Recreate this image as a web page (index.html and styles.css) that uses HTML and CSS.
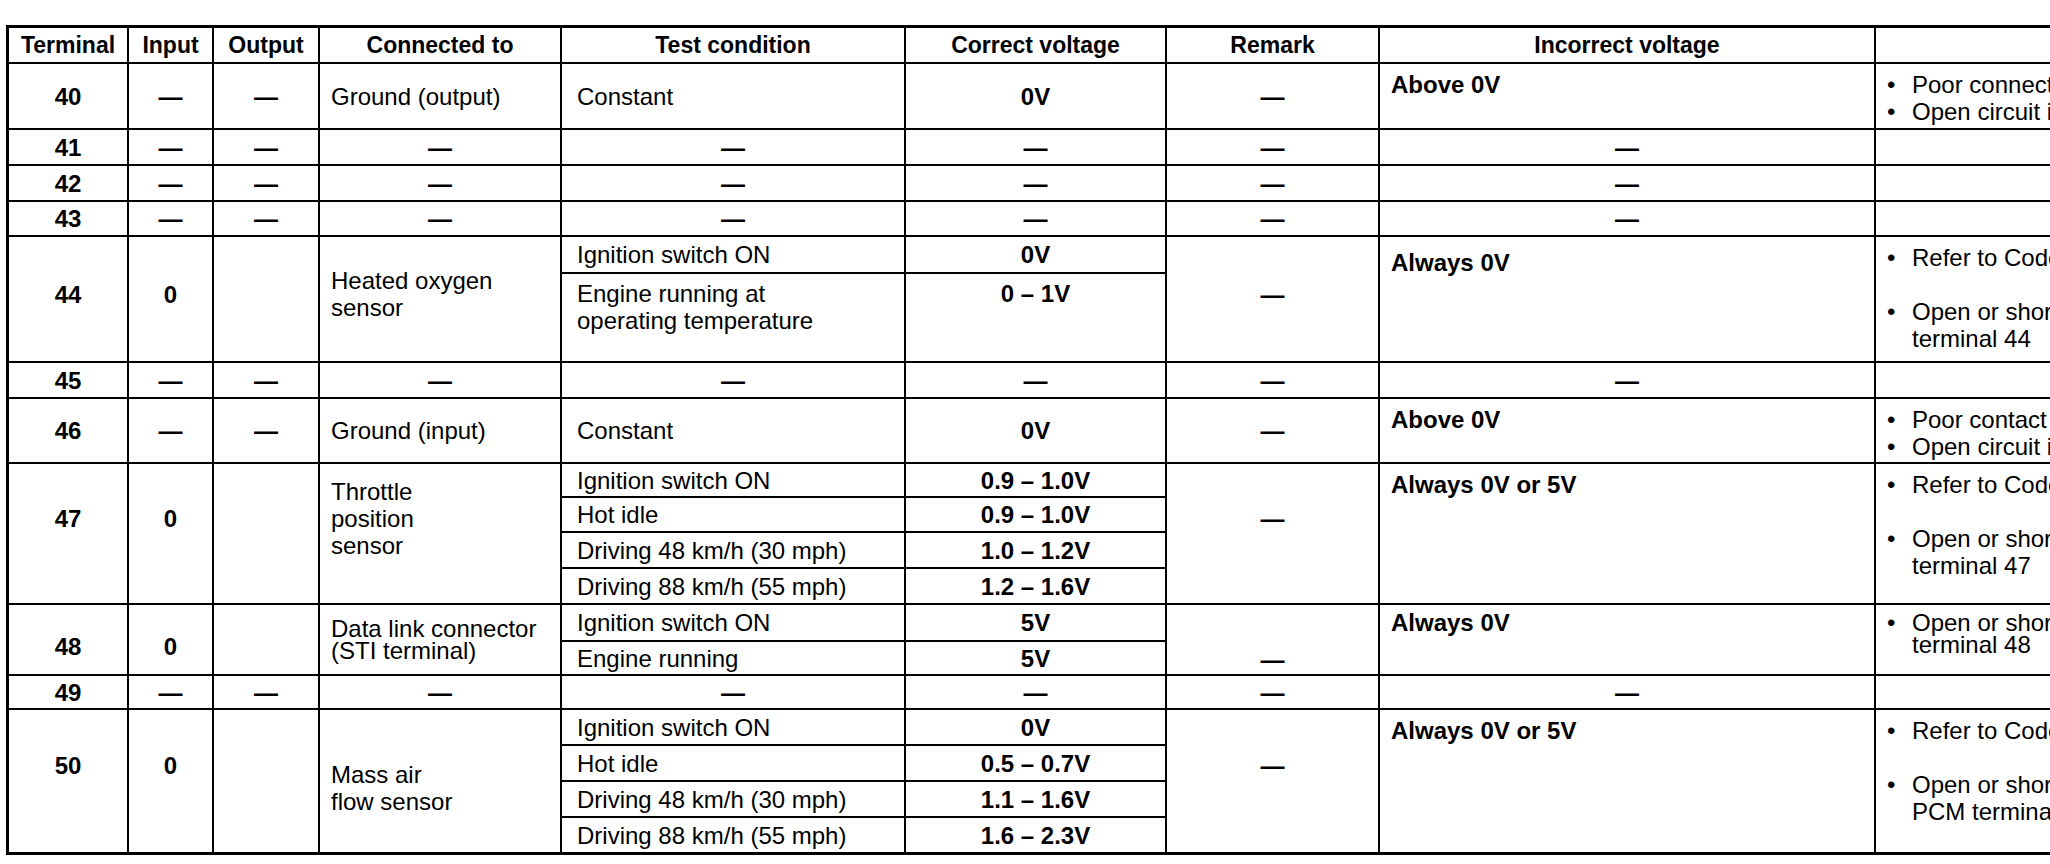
FILE: index.html
```html
<!DOCTYPE html>
<html lang="en">
<head>
<meta charset="utf-8">
<title>PCM terminal voltage table</title>
<link rel="stylesheet" href="styles.css">
</head>
<body>
<div class="page">
  <div class="sheet">
    <!-- header -->
    <div class="c h">Terminal</div>
    <div class="c h">Input</div>
    <div class="c h">Output</div>
    <div class="c h">Connected to</div>
    <div class="c h">Test condition</div>
    <div class="c h">Correct voltage</div>
    <div class="c h">Remark</div>
    <div class="c h">Incorrect voltage</div>
    <div class="c h"></div>

    <!-- 40 -->
    <div class="c ctr b">40</div>
    <div class="c ctr b">—</div>
    <div class="c ctr b">—</div>
    <div class="c lft">Ground (output)</div>
    <div class="c tc">Constant</div>
    <div class="c ctr b">0V</div>
    <div class="c ctr b">—</div>
    <div class="c inc top">Above 0V</div>
    <div class="c lst">
      <div class="li"><span class="bul">•</span><span>Poor connection of ground circuit</span></div>
      <div class="li"><span class="bul">•</span><span>Open circuit in ground circuit</span></div>
    </div>

    <!-- 41 -->
    <div class="c ctr b">41</div>
    <div class="c ctr b">—</div>
    <div class="c ctr b">—</div>
    <div class="c ctr b">—</div>
    <div class="c ctr b">—</div>
    <div class="c ctr b">—</div>
    <div class="c ctr b">—</div>
    <div class="c ctr b">—</div>
    <div class="c"></div>

    <!-- 42 -->
    <div class="c ctr b">42</div>
    <div class="c ctr b">—</div>
    <div class="c ctr b">—</div>
    <div class="c ctr b">—</div>
    <div class="c ctr b">—</div>
    <div class="c ctr b">—</div>
    <div class="c ctr b">—</div>
    <div class="c ctr b">—</div>
    <div class="c"></div>

    <!-- 43 -->
    <div class="c ctr b">43</div>
    <div class="c ctr b">—</div>
    <div class="c ctr b">—</div>
    <div class="c ctr b">—</div>
    <div class="c ctr b">—</div>
    <div class="c ctr b">—</div>
    <div class="c ctr b">—</div>
    <div class="c ctr b">—</div>
    <div class="c"></div>

    <!-- 44 -->
    <div class="c ctr b s2 up5">44</div>
    <div class="c ctr b s2 up5">0</div>
    <div class="c s2"></div>
    <div class="c lft s2 up5">Heated oxygen<br>sensor</div>
    <div class="c tc">Ignition switch ON</div>
    <div class="c ctr b">0V</div>
    <div class="c ctr b s2 up5">—</div>
    <div class="c inc top top12 s2">Always 0V</div>
    <div class="c lst top12 s2">
      <div class="li"><span class="bul">•</span><span>Refer to Code No.15</span></div>
      <div class="li gap"><span class="bul">•</span><span>Open or short circuit between heated oxygen sensor and PCM<br>terminal 44</span></div>
    </div>
    <div class="c tc top top6">Engine running at<br>operating temperature</div>
    <div class="c ctr b top top6">0 – 1V</div>

    <!-- 45 -->
    <div class="c ctr b">45</div>
    <div class="c ctr b">—</div>
    <div class="c ctr b">—</div>
    <div class="c ctr b">—</div>
    <div class="c ctr b">—</div>
    <div class="c ctr b">—</div>
    <div class="c ctr b">—</div>
    <div class="c ctr b">—</div>
    <div class="c"></div>

    <!-- 46 -->
    <div class="c ctr b">46</div>
    <div class="c ctr b">—</div>
    <div class="c ctr b">—</div>
    <div class="c lft">Ground (input)</div>
    <div class="c tc">Constant</div>
    <div class="c ctr b">0V</div>
    <div class="c ctr b">—</div>
    <div class="c inc top">Above 0V</div>
    <div class="c lst top5">
      <div class="li"><span class="bul">•</span><span>Poor contact at ground terminal</span></div>
      <div class="li"><span class="bul">•</span><span>Open circuit in ground wire</span></div>
    </div>

    <!-- 47 -->
    <div class="c ctr b s4 up15">47</div>
    <div class="c ctr b s4 up15">0</div>
    <div class="c s4"></div>
    <div class="c lft s4 up15">Throttle<br>position<br>sensor</div>
    <div class="c tc">Ignition switch ON</div>
    <div class="c ctr b">0.9 – 1.0V</div>
    <div class="c ctr b s4 up15">—</div>
    <div class="c inc top s4">Always 0V or 5V</div>
    <div class="c lst s4">
      <div class="li"><span class="bul">•</span><span>Refer to Code No.12</span></div>
      <div class="li gap"><span class="bul">•</span><span>Open or short circuit between throttle position sensor and PCM<br>terminal 47</span></div>
    </div>
    <div class="c tc">Hot idle</div>
    <div class="c ctr b">0.9 – 1.0V</div>
    <div class="c tc">Driving 48 km/h (30 mph)</div>
    <div class="c ctr b">1.0 – 1.2V</div>
    <div class="c tc">Driving 88 km/h (55 mph)</div>
    <div class="c ctr b">1.2 – 1.6V</div>

    <!-- 48 -->
    <div class="c ctr b s2 dn7">48</div>
    <div class="c ctr b s2 dn7">0</div>
    <div class="c s2"></div>
    <div class="c lft tight s2">Data link connector<br>(STI terminal)</div>
    <div class="c tc">Ignition switch ON</div>
    <div class="c ctr b">5V</div>
    <div class="c ctr b s2 dn20">—</div>
    <div class="c inc top tight s2">Always 0V</div>
    <div class="c lst tight top8 s2">
      <div class="li"><span class="bul">•</span><span>Open or short circuit between data link connector and PCM<br>terminal 48</span></div>
    </div>
    <div class="c tc">Engine running</div>
    <div class="c ctr b">5V</div>

    <!-- 49 -->
    <div class="c ctr b">49</div>
    <div class="c ctr b">—</div>
    <div class="c ctr b">—</div>
    <div class="c ctr b">—</div>
    <div class="c ctr b">—</div>
    <div class="c ctr b">—</div>
    <div class="c ctr b">—</div>
    <div class="c ctr b">—</div>
    <div class="c"></div>

    <!-- 50 -->
    <div class="c ctr b s4 up16">50</div>
    <div class="c ctr b s4 up16">0</div>
    <div class="c s4"></div>
    <div class="c lft s4 dn7">Mass air<br>flow sensor</div>
    <div class="c tc">Ignition switch ON</div>
    <div class="c ctr b">0V</div>
    <div class="c ctr b s4 up16">—</div>
    <div class="c inc top s4">Always 0V or 5V</div>
    <div class="c lst s4">
      <div class="li"><span class="bul">•</span><span>Refer to Code No.08</span></div>
      <div class="li gap"><span class="bul">•</span><span>Open or short circuit between mass air flow sensor and<br>PCM terminal 50</span></div>
    </div>
    <div class="c tc">Hot idle</div>
    <div class="c ctr b">0.5 – 0.7V</div>
    <div class="c tc">Driving 48 km/h (30 mph)</div>
    <div class="c ctr b">1.1 – 1.6V</div>
    <div class="c tc">Driving 88 km/h (55 mph)</div>
    <div class="c ctr b">1.6 – 2.3V</div>
  </div>
</div>
</body>
</html>
```

FILE: styles.css
```css
html, body {
  margin: 0;
  padding: 0;
  background: #ffffff;
  overflow: hidden;
}

body {
  font-family: "Liberation Sans", Arial, Helvetica, sans-serif;
  color: #000000;
}

.page {
  padding: 25px 0 0 6px;
  width: max-content;
}

.sheet {
  display: grid;
  grid-template-columns: 120px 85px 106px 242px 344px 261px 213px 496px 400px;
  grid-template-rows:
    36px 66px 36px 36px 35px
    37px 89px
    36px 65px
    34px 35px 36px 36px
    37px 34px
    34px
    36px 36px 36px 36px;
  border-top: 3px solid #000;
  border-left: 3px solid #000;
  border-bottom: 1px solid #000;
}

.c {
  box-sizing: border-box;
  border-right: 2px solid #000;
  border-bottom: 2px solid #000;
  display: flex;
  align-items: center;
  font-size: 24px;
  line-height: 27px;
  white-space: nowrap;
  overflow: hidden;
}

.h {
  font-weight: 700;
  font-size: 23px;
  justify-content: center;
}

.ctr {
  justify-content: center;
  text-align: center;
}

.b {
  font-weight: 700;
}

.lft {
  padding-left: 11px;
}

.tc {
  padding-left: 15px;
}

.inc {
  font-weight: 700;
  padding-left: 11px;
}

.top {
  align-items: flex-start;
  padding-top: 7px;
}

.top5 { padding-top: 5px; }
.top6 { padding-top: 6px; }
.top8 { padding-top: 7px; }
.top12 { padding-top: 12px; }

.tight {
  line-height: 22px;
}

.s2 { grid-row: span 2; }
.s4 { grid-row: span 4; }

.up5 { padding-bottom: 10px; }
.up15 { padding-bottom: 30px; }
.up16 { padding-bottom: 32px; }
.dn7 { padding-top: 14px; }
.dn20 { padding-top: 40px; }

.lst {
  flex-direction: column;
  align-items: flex-start;
  justify-content: flex-start;
  padding-left: 11px;
  padding-top: 7px;
}

.li {
  display: flex;
}

.bul {
  flex: none;
  width: 25px;
}

.gap {
  margin-top: 27px;
}
```
